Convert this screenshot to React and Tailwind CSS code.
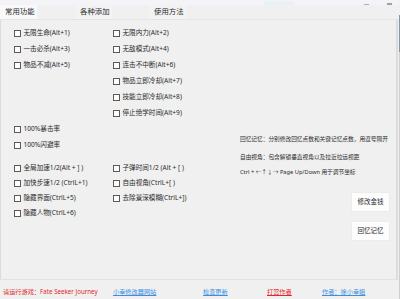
import React from 'react';

const rowsTop = [
    ['无限生命(Alt+1)', '无限内力(Alt+2)'],
    ['一击必杀(Alt+3)', '无敌模式(Alt+4)'],
    ['物品不减(Alt+5)', '连击不中断(Alt+6)'],
    [null, '物品立即冷却(Alt+7)'],
    [null, '技能立即冷却(Alt+8)'],
    [null, '停止绝学时间(Alt+9)'],
    ['100%暴击率', null],
    ['100%闪避率', null],
];

const rowsBottom = [
    ['全局加速1/2(Alt + ] )', '子弹时间1/2 (Alt + [ )'],
    ['加快步速1/2 (CtrlL+1)', '自由视角(CtrlL+[ )'],
    ['隐藏界面(CtrlL+5)', '去除景深模糊(CtrlL+])'],
    ['隐藏人物(CtrlL+6)', null],
];

const Check = ({ label }) => {
    if (!label) return <div />;
    return (
        <div className="flex items-center gap-[2.5px] h-full">
            <span className="w-[7px] h-[7px] border border-[#5a5a5a] bg-white shrink-0" />
            <span className="whitespace-nowrap">{label}</span>
        </div>
    );
};

export default function App() {
    return (
        <div className="w-[400px] h-[299px] overflow-hidden bg-[#f0f0f0] text-[#2a2a2a] font-['Noto_Sans','Noto_Sans_CJK_SC',sans-serif] flex">
            <div className="w-[399px] flex flex-col">
                {/* title bar remnant */}
                <div className="h-[5px] bg-[#f4f3f8] flex items-end">
                    <span className="ml-[264px] w-[30px] h-[4px] bg-[#e8f1f6]" />
                    <span className="ml-[70px] w-[5px] h-[1px] bg-[#b0b0b0]" />
                    <span className="ml-[18px] w-[5px] h-[2px] bg-[#a0a0a0]" />
                </div>

                {/* tabs */}
                <div className="h-[15px] flex items-stretch text-[7.4px] leading-none border-b border-[#e4e4e4]">
                    <div className="w-[37px] bg-[#f9f9f9] flex items-center pl-[5px]">常用功能</div>
                    <div className="ml-[39px] w-[36px] bg-[#f3f3f3] flex items-center pl-[4px]">各种添加</div>
                    <div className="ml-[38px] w-[37px] bg-[#f3f3f3] flex items-center pl-[4px]">使用方法</div>
                </div>

                {/* content */}
                <div className="h-[259px] flex border-l border-r-2 border-[#dcdcdc] mr-[1px]">
                    <div className="w-[239px] pl-[13px] pt-[5px] text-[6.6px] leading-none">
                        <div className="grid grid-cols-[99px_1fr] auto-rows-[16px]">
                            {rowsTop.map(([a, b], i) => (
                                <React.Fragment key={i}>
                                    <Check label={a} />
                                    <Check label={b} />
                                </React.Fragment>
                            ))}
                        </div>
                        <div className="grid grid-cols-[99px_1fr] auto-rows-[15px] mt-[8px]">
                            {rowsBottom.map(([a, b], i) => (
                                <React.Fragment key={i}>
                                    <Check label={a} />
                                    <Check label={b} />
                                </React.Fragment>
                            ))}
                        </div>
                    </div>

                    <div className="flex-1 flex flex-col pt-[116px] pr-[6px] text-[5.7px] leading-[6px] whitespace-nowrap">
                        <p>回忆记忆：分别修改回忆点数和关键记忆点数，用逗号隔开</p>
                        <p className="mt-[12px]">自由视角：包含解锁垂直视角以及拉近拉远视距</p>
                        <p className="mt-[9px]">Ctrl + ←↑↓→ Page Up/Down 用于调节坐标</p>
                        <div className="self-end flex flex-col gap-[9px] mt-[17px] text-[6.5px] leading-none">
                            <button className="w-[39px] h-[20px] bg-[#fdfdfd] border border-[#ececec] flex items-center justify-center">修改金钱</button>
                            <button className="w-[39px] h-[20px] bg-[#fdfdfd] border border-[#ececec] flex items-center justify-center">回忆记忆</button>
                        </div>
                    </div>
                </div>

                {/* footer */}
                <div className="flex-1 border-t border-[#e2e2e2] pt-[9px] pl-[3px] flex text-[6.2px] leading-none whitespace-nowrap">
                    <span className="w-[110px] text-[#e3262b]">请运行游戏：Fate Seeker Journey</span>
                    <span className="w-[90px]"><a className="text-[#3b8fe0] underline">小幸修改器网站</a></span>
                    <span className="w-[64px]"><a className="text-[#3b8fe0] underline">检查更新</a></span>
                    <span className="w-[55px]"><a className="text-[#e3262b] underline">打赏作者</a></span>
                    <span><a className="text-[#3b8fe0] underline">作者：徐小幸姐</a></span>
                </div>
            </div>
            <div className="w-[1px] flex flex-col">
                <div className="mt-[15px] h-[37px] bg-[#7e98b2]" />
                <div className="flex-1 bg-[#cfcfcf]" />
            </div>
        </div>
    );
}
